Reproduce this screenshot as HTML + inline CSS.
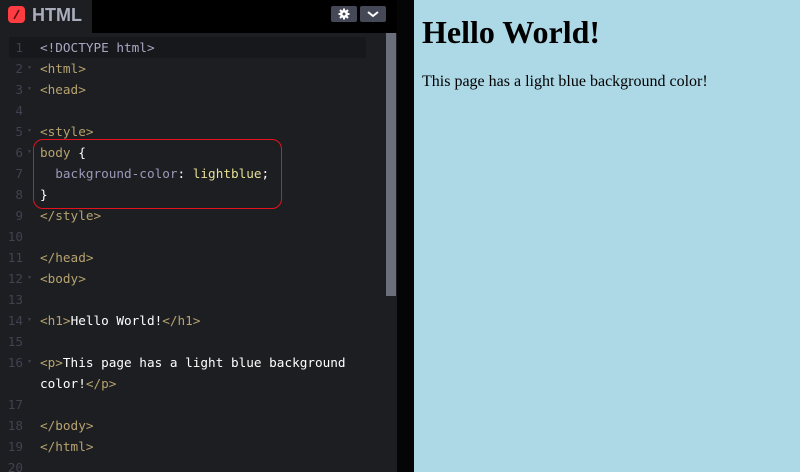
<!DOCTYPE html>
<html><head><style>
*{margin:0;padding:0;box-sizing:border-box}
html,body{width:800px;height:472px;overflow:hidden}
body{background:#050505;position:relative;font-family:"Liberation Sans",sans-serif}
.hdr{position:absolute;left:0;top:0;width:397px;height:33px;background:#000}
.tab{position:absolute;left:0;top:0;width:92px;height:33px;background:#1d1e22}
.logo{position:absolute;left:8px;top:6px;width:17px;height:17px;background:#ff3c41;border-radius:4px}
.tabt{position:absolute;left:32px;top:5px;font-size:18px;font-weight:bold;color:#aaaebc}
.btn{position:absolute;top:6px;height:16px;background:#444857;border-radius:2px}
.ed{position:absolute;left:0;top:33px;width:397px;height:439px;background:#1d1e22}
.sb{position:absolute;left:386px;top:33px;width:10px;height:263px;background:#6b6e7b}
.hl{position:absolute;left:9px;top:37px;width:357px;height:21px;background:#17181b}
.ln{position:absolute;left:0;width:23px;text-align:right;font:12.7px "DejaVu Sans Mono",monospace;color:#3f4250;line-height:21px}
.ar{position:absolute;left:27px;font-size:5px;color:#3f4250;line-height:21px}
.cl{position:absolute;left:40px;font:12.7px "DejaVu Sans Mono",monospace;line-height:21px;white-space:pre;color:#fff}
.t{color:#b7a36f}.d{color:#a7a8c2}.p{color:#9e97b8}.v{color:#e6df95}
.box{position:absolute;left:33px;top:139px;width:249px;height:70px;border:1px solid #e3121c;border-radius:10px}
.pv{position:absolute;left:414px;top:0;width:386px;height:472px;background:#add8e6;font-family:"Liberation Serif",serif;color:#000}
.pv h1{position:absolute;left:8px;top:14px;font-size:32px;font-weight:bold}
.pv p{position:absolute;left:8px;top:73px;font-size:16px}
</style></head><body>
<div class="hdr"><div class="tab"><div class="logo"><svg width="17" height="17"><line x1="11" y1="4" x2="6" y2="13" stroke="#5a1015" stroke-width="1.6"/></svg></div><div class="tabt">HTML</div></div>
<div class="btn" style="left:331px;width:26px"><svg width="26" height="16"><g stroke="#fff" stroke-width="2"><line x1="13" y1="2.5" x2="13" y2="13.5"/><line x1="7.5" y1="8" x2="18.5" y2="8"/><line x1="9" y1="4" x2="17" y2="12"/><line x1="17" y1="4" x2="9" y2="12"/></g><circle cx="13" cy="8" r="4" fill="#fff"/><circle cx="13" cy="8" r="1.5" fill="#444857"/></svg></div>
<div class="btn" style="left:360px;width:26px"><svg width="26" height="16"><polyline points="8,6 13,10 18,6" fill="none" stroke="#fff" stroke-width="2"/></svg></div>
</div>
<div class="ed"></div>
<div class="hl"></div>
<div class="sb"></div>
<div id="code"></div>
<div class="box"></div>
<div class="pv"><h1>Hello World!</h1><p>This page has a light blue background color!</p></div>
<script>
var L=[
['<span class="d">&lt;!DOCTYPE html&gt;</span>',0],
['<span class="t">&lt;html&gt;</span>',1],
['<span class="t">&lt;head&gt;</span>',1],
['',0],
['<span class="t">&lt;style&gt;</span>',1],
['<span class="t">body</span> {',1],
['  <span class="p">background-color</span>: <span class="v">lightblue</span>;',0],
['}',0],
['<span class="t">&lt;/style&gt;</span>',0],
['',0],
['<span class="t">&lt;/head&gt;</span>',0],
['<span class="t">&lt;body&gt;</span>',1],
['',0],
['<span class="t">&lt;h1&gt;</span>Hello World!<span class="t">&lt;/h1&gt;</span>',1],
['',0],
['<span class="t">&lt;p&gt;</span>This page has a light blue background',1,'color!<span class="t">&lt;/p&gt;</span>'],
['',0],
['<span class="t">&lt;/body&gt;</span>',0],
['<span class="t">&lt;/html&gt;</span>',0],
['',0]];
var h='',y=37;
for(var i=0;i<L.length;i++){
h+='<div class="ln" style="top:'+y+'px">'+(i+1)+'</div>';
if(L[i][1])h+='<div class="ar" style="top:'+y+'px">&#9660;</div>';
h+='<div class="cl" style="top:'+y+'px">'+L[i][0]+'</div>';
y+=21;
if(L[i][2]){h+='<div class="cl" style="top:'+y+'px">'+L[i][2]+'</div>';y+=21;}
}
document.getElementById('code').innerHTML=h;
</script>
</body></html>
